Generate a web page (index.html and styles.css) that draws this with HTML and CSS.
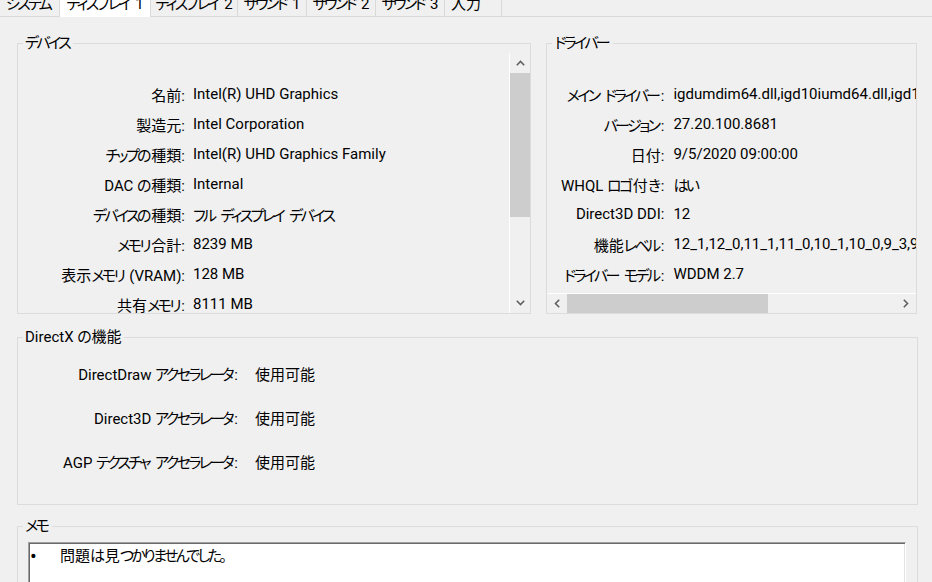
FILE: index.html
```html
<!DOCTYPE html>
<html lang="ja">
<head>
<meta charset="utf-8">
<title>DirectX 診断ツール</title>
<link rel="stylesheet" href="styles.css">
</head>
<body>
<div class="tabstrip">
  <div class="tab t-sys"><span class="j">システム</span></div>
  <div class="tab active t-d1"><span class="j">ディスプレイ</span> 1</div>
  <div class="tab t-d2"><span class="j">ディスプレイ</span> 2</div>
  <div class="tab t-s"><span class="j">サウンド</span> 1</div>
  <div class="tab t-s"><span class="j">サウンド</span> 2</div>
  <div class="tab t-s"><span class="j">サウンド</span> 3</div>
  <div class="tab t-in">入力</div>
</div>
<div class="page">
  <div class="top-row">
    <fieldset class="group device">
      <legend><span class="j">デバイス</span></legend>
      <div class="scrollbox">
        <div class="list kv dev-kv">
          <div class="k">名前:</div><div class="v">Intel(R) UHD Graphics</div>
          <div class="k">製造元:</div><div class="v">Intel Corporation</div>
          <div class="k"><span class="j">チップの</span>種類:</div><div class="v">Intel(R) UHD Graphics Family</div>
          <div class="k">DAC <span class="j">の</span>種類:</div><div class="v">Internal</div>
          <div class="k"><span class="j">デバイスの</span>種類:</div><div class="v"><span class="j">フル</span> <span class="j">ディスプレイ</span> <span class="j">デバイス</span></div>
          <div class="k"><span class="j">メモリ</span>合計:</div><div class="v">8239 MB</div>
          <div class="k">表示<span class="j">メモリ</span> (VRAM):</div><div class="v">128 MB</div>
          <div class="k">共有<span class="j">メモリ</span>:</div><div class="v">8111 MB</div>
        </div>
        <div class="vscroll">
          <div class="sbtn"><svg width="9" height="6" viewBox="0 0 9 6"><polyline points="0.8,5.2 4.5,1.5 8.2,5.2" fill="none" stroke="#606060" stroke-width="1.6"/></svg></div>
          <div class="vthumb"></div>
          <div class="sfill"></div>
          <div class="sbtn"><svg width="9" height="6" viewBox="0 0 9 6"><polyline points="0.8,0.8 4.5,4.5 8.2,0.8" fill="none" stroke="#606060" stroke-width="1.6"/></svg></div>
        </div>
      </div>
    </fieldset>
    <fieldset class="group driver">
      <legend><span class="j">ドライバー</span></legend>
      <div class="drvbox">
        <div class="list kv drv-kv">
          <div class="k"><span class="j">メイン</span> <span class="j">ドライバー</span>:</div><div class="v">igdumdim64.dll,igd10iumd64.dll,igd10iumd64.dll,igd12umd64.dll</div>
          <div class="k"><span class="j">バージョン</span>:</div><div class="v">27.20.100.8681</div>
          <div class="k">日付:</div><div class="v">9/5/2020 09:00:00</div>
          <div class="k">WHQL <span class="j">ロゴ</span>付<span class="j">き</span>:</div><div class="v"><span class="j">はい</span></div>
          <div class="k">Direct3D DDI:</div><div class="v">12</div>
          <div class="k">機能<span class="j">レベル</span>:</div><div class="v">12_1,12_0,11_1,11_0,10_1,10_0,9_3,9_2,9_1</div>
          <div class="k"><span class="j">ドライバー</span> <span class="j">モデル</span>:</div><div class="v">WDDM 2.7</div>
        </div>
      </div>
      <div class="hscroll">
        <div class="sbtn"><svg width="6" height="9" viewBox="0 0 6 9"><polyline points="5.2,0.8 1.5,4.5 5.2,8.2" fill="none" stroke="#606060" stroke-width="1.6"/></svg></div>
        <div class="hthumb"></div>
        <div class="sfill"></div>
        <div class="sbtn"><svg width="6" height="9" viewBox="0 0 6 9"><polyline points="0.8,0.8 4.5,4.5 0.8,8.2" fill="none" stroke="#606060" stroke-width="1.6"/></svg></div>
      </div>
    </fieldset>
  </div>
  <fieldset class="group dx">
    <legend>DirectX <span class="j">の</span>機能</legend>
    <div class="kv dx-kv">
      <div class="k">DirectDraw <span class="j">アクセラレータ</span>:</div><div class="v">使用可能</div>
      <div class="k">Direct3D <span class="j">アクセラレータ</span>:</div><div class="v">使用可能</div>
      <div class="k">AGP <span class="j">テクスチャ</span> <span class="j">アクセラレータ</span>:</div><div class="v">使用可能</div>
    </div>
  </fieldset>
  <fieldset class="group memo">
    <legend><span class="j">メモ</span></legend>
    <div class="memobox">
      <div class="note"><span class="bullet">•</span><span>問題<span class="j">は</span>見<span class="j">つかりませんでした。</span></span></div>
    </div>
  </fieldset>
</div>
</body>
</html>
```
FILE: styles.css
```css
html, body {
  margin: 0;
  padding: 0;
}
body {
  width: 932px;
  height: 582px;
  overflow: hidden;
  background: #f0f0f0;
  color: #000;
  font-family: Roboto, "Noto Sans CJK JP", sans-serif;
  font-size: 15px;
  font-feature-settings: "palt";
}
.j {
  letter-spacing: -2.6px;
  margin-right: 2.4px;
}

/* tabs */
.tabstrip {
  display: flex;
  align-items: flex-end;
  height: 16px;
  border-bottom: 1px solid #d9d9d9;
}
.tab {
  box-sizing: border-box;
  height: 22px;
  line-height: 20px;
  border-right: 1px solid #d9d9d9;
  text-align: center;
  white-space: nowrap;
  overflow: hidden;
  flex: none;
}
.t-sys { width: 60px; text-align: left; padding-left: 6px; }
.t-d1 { width: 91px; }
.t-d2 { width: 87px; }
.t-s { width: 69px; }
.t-in { width: 57px; text-align: left; padding-left: 6px; }
.tab.active {
  background: #fff;
  margin-bottom: -1px;
  height: 23px;
}

/* page */
.page {
  padding: 16px 15px 0 17px;
}
.top-row {
  display: flex;
  gap: 15px;
}
.group {
  margin: 0;
  padding: 0;
  border: 1px solid #dcdcdc;
  min-width: 0;
  box-sizing: border-box;
}
.group legend {
  margin-left: 5px;
  padding: 0 2px;
  line-height: 20px;
  white-space: nowrap;
}
.device { width: 515px; }
.driver { width: 371px; }

.scrollbox {
  display: flex;
  height: 260px;
}
.list {
  flex: 1;
  min-width: 0;
  overflow: hidden;
}
.kv {
  display: grid;
  align-items: center;
  white-space: nowrap;
}
.kv .k { text-align: right; }
.kv .v { overflow: hidden; }
.dev-kv {
  grid-template-columns: 167px 1fr;
  grid-auto-rows: 30px;
  column-gap: 8px;
  padding-top: 26px;
  align-content: start;
}

.vscroll {
  width: 20px;
  border-left: 1px solid #fff;
  display: flex;
  flex-direction: column;
}
.sbtn {
  width: 20px;
  height: 20px;
  display: flex;
  align-items: center;
  justify-content: center;
  flex: none;
}
.vthumb {
  height: 144px;
  background: #cdcdcd;
  flex: none;
}
.sfill { flex: 1; }

.drvbox {
  height: 240px;
  display: flex;
}
.drv-kv {
  grid-template-columns: 117px 1fr;
  grid-auto-rows: 30px;
  column-gap: 9px;
  padding-top: 26px;
  align-content: start;
}
.drv-kv .v { overflow: visible; }
.hscroll {
  height: 19px;
  border-top: 1px solid #fff;
  display: flex;
  align-items: stretch;
}
.hscroll .sbtn { height: 19px; }
.hthumb {
  width: 201px;
  background: #cdcdcd;
  flex: none;
}

.dx {
  width: 901px;
  margin-top: 13px;
}
.dx-kv {
  grid-template-columns: 220px 1fr;
  grid-auto-rows: 44px;
  column-gap: 17px;
  padding: 4px 0 21px;
}

.memo {
  width: 901px;
  margin-top: 11px;
}
.memobox {
  margin: 6px 11px 0 10px;
  height: 70px;
  background: #fff;
  border: 1px solid;
  border-color: #a0a0a0 #ffffff #ffffff #a0a0a0;
  box-shadow: inset 1px 1px 0 #696969, inset -1px -1px 0 #e3e3e3;
}
.note {
  display: flex;
  line-height: 20px;
  padding: 3px 0 0 0;
}
.bullet {
  width: 31px;
  flex: none;
  font-size: 20px;
  line-height: 20px;
  padding-left: 1px;
  box-sizing: border-box;
}
```
